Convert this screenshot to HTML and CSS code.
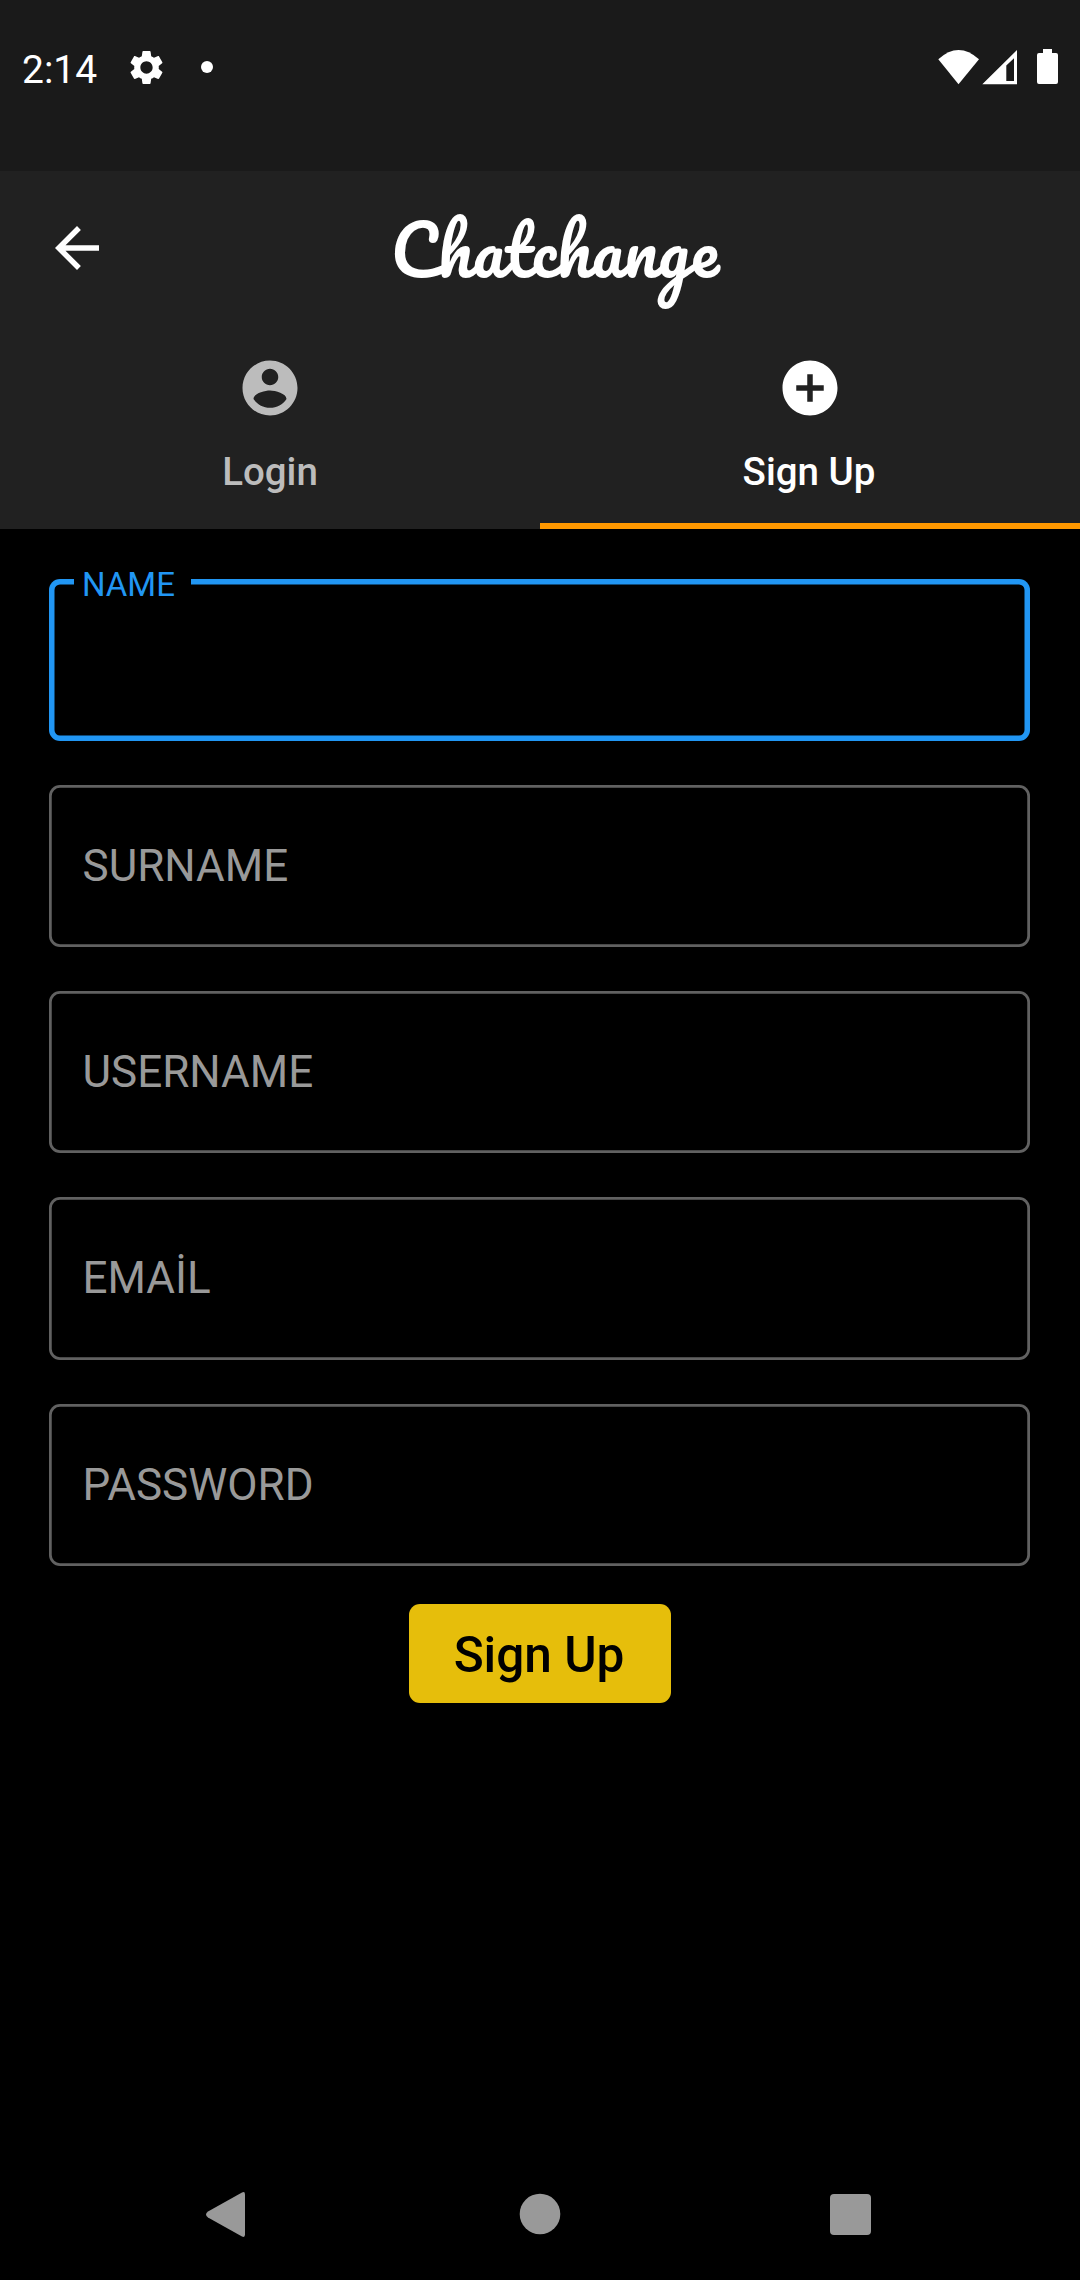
FILE: index.html
```html
<!DOCTYPE html>
<html lang="en">
<head>
<meta charset="utf-8">
<title>Chatchange</title>
<link rel="stylesheet" href="styles.css">
</head>
<body>
<div class="status">
  <span class="time">2:14</span>
  <svg class="gear" viewBox="0 0 24 24"><path d="M19.14 12.94c.04-.3.06-.61.06-.94 0-.32-.02-.64-.07-.94l2.03-1.58c.18-.14.23-.41.12-.61l-1.92-3.32c-.12-.22-.37-.29-.59-.22l-2.39.96c-.5-.38-1.03-.7-1.62-.94l-.36-2.54c-.04-.24-.24-.41-.48-.41h-3.84c-.24 0-.43.17-.47.41l-.36 2.54c-.59.24-1.13.57-1.62.94l-2.39-.96c-.22-.08-.47 0-.59.22L2.74 8.87c-.12.21-.08.47.12.61l2.03 1.58c-.05.3-.09.63-.09.94s.02.64.07.94l-2.03 1.58c-.18.14-.23.41-.12.61l1.92 3.32c.12.22.37.29.59.22l2.39-.96c.5.38 1.03.7 1.62.94l.36 2.54c.05.24.24.41.48.41h3.84c.24 0 .44-.17.47-.41l.36-2.54c.59-.24 1.13-.56 1.62-.94l2.39.96c.22.08.47 0 .59-.22l1.92-3.32c.12-.22.07-.47-.12-.61l-2.01-1.58zM12 15.6c-1.98 0-3.6-1.62-3.6-3.6s1.62-3.6 3.6-3.6 3.6 1.62 3.6 3.6-1.62 3.6-3.6 3.6z"/></svg>
  <span class="dot"></span>
  <svg class="signals" viewBox="0 0 122 36">
    <path d="M0.3 10.3Q20.5-8.3 41 10.3L20.5 35.3Z"/>
    <path fill-rule="evenodd" d="M44.3 35.3 79 1V35.3ZM68.3 16.5V32H76V9.3Z"/>
    <path d="M105 0h9v4h4a2 2 0 0 1 2 2v27a2 2 0 0 1-2 2h-17a2 2 0 0 1-2-2V6a2 2 0 0 1 2-2h4z"/>
  </svg>
</div>
<header class="header">
  <div class="toolbar">
    <svg class="icon" viewBox="0 0 24 24"><path d="M20 11H7.83l5.59-5.59L12 4l-8 8 8 8 1.41-1.41L7.83 13H20v-2z"/></svg>
    <h1 class="brand">Chatchange</h1>
  </div>
  <nav class="tabs">
    <div class="tab">
      <svg class="icon" viewBox="0 0 24 24"><path d="M12 2C6.48 2 2 6.48 2 12s4.48 10 10 10 10-4.48 10-10S17.52 2 12 2zm0 3c1.66 0 3 1.34 3 3s-1.34 3-3 3-3-1.34-3-3 1.34-3 3-3zm0 14.2c-2.5 0-4.71-1.28-6-3.22.03-1.99 4-3.08 6-3.08 1.99 0 5.97 1.09 6 3.08-1.29 1.94-3.5 3.22-6 3.22z"/></svg>
      <span class="tab-label">Login</span>
    </div>
    <div class="tab tab-active">
      <svg class="icon" viewBox="0 0 24 24"><path d="M12 2C6.48 2 2 6.48 2 12s4.48 10 10 10 10-4.48 10-10S17.52 2 12 2zm5 11h-4v4h-2v-4H7v-2h4V7h2v4h4v2z"/></svg>
      <span class="tab-label">Sign Up</span>
    </div>
  </nav>
</header>
<main class="form">
  <div class="field field-focused"><span class="field-label">NAME</span></div>
  <div class="field">SURNAME</div>
  <div class="field">USERNAME</div>
  <div class="field">EMAİL</div>
  <div class="field">PASSWORD</div>
  <button class="submit">Sign Up</button>
</main>
<footer class="navbar">
  <svg class="nav-icon" viewBox="0 0 48 48"><path d="M40 1.5Q43 0 43 3.5V43.500Q43 47 40 45.500L6 26.500Q2 23.500 6 20.500Z"/></svg>
  <svg class="nav-icon" viewBox="0 0 48 48"><circle cx="26" cy="23" r="20.300"/></svg>
  <svg class="nav-icon" viewBox="0 0 48 48"><rect x="4" y="3" width="41" height="41" rx="4"/></svg>
</footer>
</body>
</html>
```
FILE: styles.css
```css
* { box-sizing: border-box; }

body {
  margin: 0;
  width: 1080px;
  height: 2280px;
  display: flex;
  flex-direction: column;
  overflow: hidden;
  background: #000;
  color: #fff;
  font-family: Roboto, sans-serif;
}

svg { display: block; fill: currentColor; }

.status {
  height: 171px;
  padding: 49px 20px 0 22px;
  display: flex;
  align-items: flex-start;
  background: #1a1a1a;
}

.time {
  width: 104px;
  font-size: 39px;
  line-height: 43px;
}

.gear { width: 41px; height: 41px; margin-top: -2px; }

.dot {
  width: 12px;
  height: 12px;
  margin: 12px 0 0 34px;
  border-radius: 50%;
  background: #fff;
}

.signals { width: 122px; height: 36px; margin-left: auto; }

.header {
  height: 357.5px;
  background: #212121;
}

.toolbar {
  height: 154px;
  padding-left: 44px;
  display: flex;
  align-items: center;
}

.icon { width: 66px; height: 66px; flex: none; }

.brand {
  margin: 2px 0 0 280.5px;
  font: 400 68.75px/118px Pacifico, cursive;
  white-space: nowrap;
}

.tabs { display: flex; height: 203.5px; }

.tab {
  flex: 1;
  display: flex;
  flex-direction: column;
  align-items: center;
  padding-top: 30px;
  color: #bcbcbc;
}

.tab-active {
  color: #fff;
  border-bottom: 6px solid #ff9800;
}

.tab-label {
  margin-top: 28px;
  font-size: 38.5px;
  font-weight: 500;
  line-height: 45px;
}

.tab-active .tab-label { margin-right: 2px; }

.form {
  flex: 1;
  display: flex;
  flex-direction: column;
  align-items: center;
  gap: 44px;
  padding-top: 50px;
}

.field {
  position: relative;
  width: 981px;
  height: 162.25px;
  margin-right: 1px;
  padding-left: 33.5px;
  border-radius: 11px;
  box-shadow: inset 0 0 0 2.75px #616161;
  color: #999;
  font-size: 44px;
  line-height: 163px;
}

.field-focused { box-shadow: inset 0 0 0 5.5px #2196f3; }

.field-label {
  position: absolute;
  left: 25px;
  top: -14px;
  width: 117px;
  padding-left: 8px;
  background: #000;
  color: #2196f3;
  font-size: 33px;
  line-height: 39px;
}

.submit {
  width: 261.5px;
  height: 99px;
  margin-top: -6px;
  padding: 3px 2px 0 0;
  border: 0;
  border-radius: 11px;
  background: #e6be0b;
  color: #000;
  font: 500 49.5px/96px Roboto, sans-serif;
}

.navbar {
  height: 132px;
  padding: 43px 206px 0 202px;
  display: flex;
  justify-content: space-between;
  color: #999;
}

.nav-icon { width: 48px; height: 48px; }
```
